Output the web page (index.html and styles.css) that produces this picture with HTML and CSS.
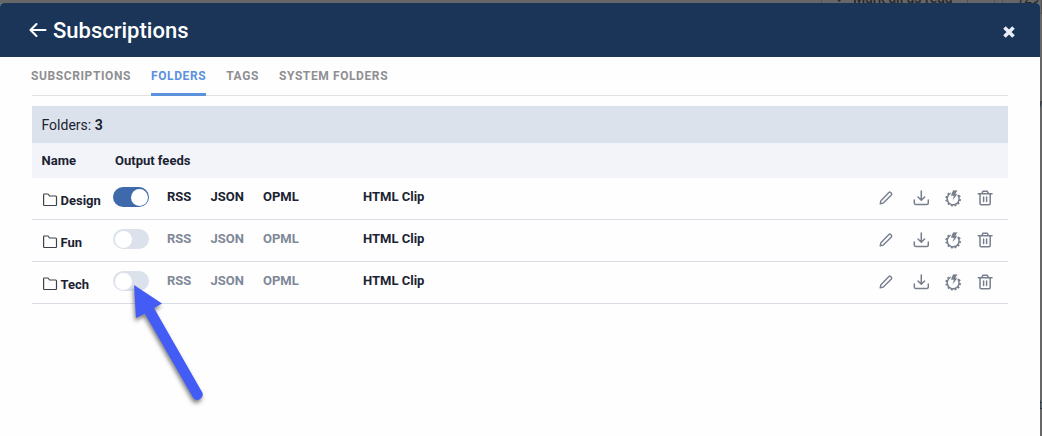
FILE: index.html
```html
<!DOCTYPE html>
<html lang="en">
<head>
  <meta charset="UTF-8" />
  <meta name="viewport" content="width=device-width, initial-scale=1.0"/>
  <title>Subscriptions</title>
  <link rel="stylesheet" href="styles.css">
</head>
<body>
  <svg class="sprite" aria-hidden="true">
    <symbol id="folder" viewBox="0 0 16 14">
      <path d="M1.6 11.8V1.7q0-.7.7-.7h3.7l1.6 2h6q.9 0 .9.9v7.9q0 .7-.7.7H2.3q-.7 0-.7-.7z"/>
    </symbol>
    <symbol id="pencil" viewBox="0 0 16 16">
      <path d="M2.2 13.8l.7-3.1 8-8.2q.8-.8 1.7 0l.8.8q.8.9 0 1.7l-8.1 8.1z"/>
    </symbol>
    <symbol id="download" viewBox="0 0 16 16">
      <path d="M8.3 1v9M5 7l3.3 3.3L11.6 7M1.3 10v3q0 1.4 1.4 1.4h11.2q1.4 0 1.4-1.4v-3"/>
    </symbol>
    <symbol id="gear" viewBox="0 0 18 18">
      <path d="M6.6 4.4A6 6 0 1 0 14 6.3"/>
      <path class="teeth" d="M5 5.6L3.7 4.3M3.4 8.2L1.6 7.7M3.4 11.4l-1.8.5M5.2 14.2l-1.3 1.3M8 15.8l-.5 1.6M11.2 15.6l.6 1.6M13.7 13.8l1.5 1.2M15.1 10.9l1.8.4M14.6 7.6l1.7-.8"/>
      <path class="bolt" d="M9 1h5l-2.1 3.8H14L8.2 12.4l1.1-5.3H6.6z"/>
    </symbol>
    <symbol id="trash" viewBox="0 0 16 16">
      <path d="M1.2 3.8h13.8M4.9 3.4l1-2.2h4.4l1 2.2M3 3.8v9.8q0 1.2 1.2 1.2H12q1.2 0 1.2-1.2V3.8M6.6 7v4.6M9.6 7v4.6"/>
    </symbol>
  </svg>

  <div class="page">
    <div class="toolbar">
      <div class="tool-button"><span class="check">✓</span>Mark all as read</div>
      <div class="tool-gap"></div>
      <div class="tool-count">129</div>
    </div>
    <div class="side-text">w</div>
    <div class="side-text lower">t</div>
  </div>

  <div class="modal">
    <div class="modal-header">
      <svg class="back" viewBox="0 0 18 16"><path d="M16.5 8H2M7.5 2L1.5 8l6 6"/></svg>
      <div class="title">Subscriptions</div>
      <svg class="close" viewBox="0 0 12 12"><path d="M1.5 1.5l9 9M10.5 1.5l-9 9"/></svg>
    </div>

    <div class="content">
      <div class="tabs">
        <div class="tab">SUBSCRIPTIONS</div>
        <div class="tab active">FOLDERS</div>
        <div class="tab">TAGS</div>
        <div class="tab">SYSTEM FOLDERS</div>
      </div>

      <div class="count">Folders:&nbsp;<b>3</b></div>
      <div class="row table-head">
        <div>Name</div>
        <div class="feeds-title">Output feeds</div>
      </div>

      <div class="row">
        <div class="name"><svg class="folder"><use href="#folder"/></svg>Design</div>
        <div class="toggle on"></div>
        <div class="feed">RSS</div>
        <div class="feed">JSON</div>
        <div class="feed">OPML</div>
        <div class="feed">HTML Clip</div>
        <div class="actions">
          <svg class="pencil"><use href="#pencil"/></svg>
          <svg><use href="#download"/></svg>
          <svg class="gear"><use href="#gear"/></svg>
          <svg><use href="#trash"/></svg>
        </div>
      </div>

      <div class="row">
        <div class="name"><svg class="folder"><use href="#folder"/></svg>Fun</div>
        <div class="toggle"></div>
        <div class="feed disabled">RSS</div>
        <div class="feed disabled">JSON</div>
        <div class="feed disabled">OPML</div>
        <div class="feed">HTML Clip</div>
        <div class="actions">
          <svg class="pencil"><use href="#pencil"/></svg>
          <svg><use href="#download"/></svg>
          <svg class="gear"><use href="#gear"/></svg>
          <svg><use href="#trash"/></svg>
        </div>
      </div>

      <div class="row">
        <div class="name"><svg class="folder"><use href="#folder"/></svg>Tech</div>
        <div class="toggle"></div>
        <div class="feed disabled">RSS</div>
        <div class="feed disabled">JSON</div>
        <div class="feed disabled">OPML</div>
        <div class="feed">HTML Clip</div>
        <div class="actions">
          <svg class="pencil"><use href="#pencil"/></svg>
          <svg><use href="#download"/></svg>
          <svg class="gear"><use href="#gear"/></svg>
          <svg><use href="#trash"/></svg>
        </div>
      </div>
    </div>
  </div>

  <svg class="pointer" viewBox="0 0 90 130">
    <path d="M14 5L42 23.5 34 28 82.3 112.5A5.3 5.3 0 0 1 73.2 117.7L24.8 33.5 16 38z"/>
  </svg>
</body>
</html>
```
FILE: styles.css
```css
body {
  margin: 0;
  height: 436px;
  overflow: hidden;
  position: relative;
  font-family: Roboto, sans-serif;
  font-size: 13px;
  color: #1b2332;
}
.sprite {
  position: absolute;
  width: 0;
  height: 0;
}
svg {
  fill: none;
  stroke: currentColor;
  stroke-linecap: round;
  stroke-linejoin: round;
}

/* dimmed page behind the dialog */
.page {
  height: 436px;
  background-color: #676767;
  color: #292929;
}
.toolbar {
  display: flex;
  height: 14px;
  padding-left: 821px;
}
.tool-button,
.tool-gap,
.tool-count {
  box-sizing: border-box;
  border: 1px solid #535353;
  border-top: none;
  white-space: nowrap;
  line-height: 0;
  margin-top: -2px;
}
.tool-button {
  width: 148px;
  padding-left: 14px;
  font-size: 14px;
  font-weight: 500;
}
.check {
  margin-right: 7px;
  font-size: 12px;
}
.tool-gap {
  width: 27px;
  border-left: none;
}
.tool-count {
  margin-left: 7px;
  width: 40px;
  padding-left: 13px;
  font-size: 14px;
}
.side-text {
  text-align: right;
  font-size: 12px;
  padding-top: 83px;
}
.side-text.lower {
  padding-top: 287px;
}

.modal {
  position: absolute;
  top: 3px;
  left: 0;
  width: 1040px;
  height: 433px;
  border-radius: 4px 4px 0 0;
  background-color: #fefefe;
  overflow: hidden;
}
.modal-header {
  display: flex;
  align-items: center;
  box-sizing: border-box;
  height: 54px;
  padding: 0 25px 0 29px;
  background-color: #1b3558;
  color: #fff;
}
.back {
  width: 18px;
  height: 16px;
  stroke-width: 2.1;
}
.title {
  flex: 1;
  margin-left: 6px;
  font-size: 22px;
  font-weight: 500;
}
.close {
  width: 12px;
  height: 12px;
  margin-top: 3px;
  stroke: #e9eef8;
  stroke-width: 3.6;
  stroke-linecap: butt;
}
.content {
  padding: 0 32px;
}
.tabs {
  display: flex;
  gap: 20px;
  height: 38px;
  margin-bottom: 10px;
  border-bottom: 1px solid #dfe1e5;
}
.tab {
  height: 36px;
  line-height: 38px;
  font-size: 12px;
  font-weight: bold;
  letter-spacing: 0.6px;
  color: #8e8f92;
}
.tab:first-child {
  margin-left: -1px;
}
.active {
  color: #5c91dc;
  border-bottom: 3px solid #5c91dc;
}
.count {
  height: 37px;
  line-height: 38px;
  padding-left: 9.5px;
  font-size: 14px;
  background-color: #dce2ec;
}
.row {
  display: grid;
  grid-template-columns: 71.5px 54px 43.5px 52.5px 100px 100px 1fr;
  box-sizing: border-box;
  height: 42px;
  padding-left: 9.5px;
  border-bottom: 1px solid #d9dee4;
  font-weight: bold;
  line-height: 38px;
}
.table-head {
  height: 35px;
  border: none;
  line-height: 35px;
  background-color: #f3f4f9;
}
.feeds-title {
  padding-left: 2px;
  white-space: nowrap;
}
.name {
  display: flex;
  line-height: 45px;
}
.folder {
  width: 16px;
  height: 14px;
  margin: 15px 3px 0 0;
  stroke: #3c414b;
  stroke-width: 1.2;
}
.toggle {
  width: 36px;
  height: 20px;
  margin-top: 9px;
  box-sizing: border-box;
  padding: 1.5px;
  border-radius: 10px;
  background-color: #dce2eb;
}
.toggle::after {
  content: "";
  display: block;
  width: 17px;
  height: 17px;
  border-radius: 50%;
  background-color: #fff;
}
.toggle.on {
  background-color: #3e69ab;
}
.toggle.on::after {
  margin-left: auto;
}
.disabled {
  color: #7f8897;
}
.actions {
  display: flex;
  justify-content: flex-end;
  gap: 16px;
  padding: 12px 15px 0 0;
  color: #777f8d;
}
.actions svg {
  width: 16px;
  height: 16px;
  stroke-width: 1.5;
}
.actions .pencil {
  margin-right: 3px;
  stroke-width: 1.4;
}
.actions .gear {
  width: 18px;
  height: 18px;
  margin: -1px -1px 0;
}
.teeth {
  stroke-width: 2;
  stroke-linecap: butt;
}
.bolt {
  fill: currentColor;
  stroke: #fefefe;
  stroke-width: 0.8;
}

.pointer {
  position: absolute;
  left: 120px;
  top: 280px;
  width: 90px;
  height: 130px;
  fill: #425cf5;
  stroke: none;
  filter: drop-shadow(-1px 3px 2px rgba(0, 0, 0, 0.5));
}
```
